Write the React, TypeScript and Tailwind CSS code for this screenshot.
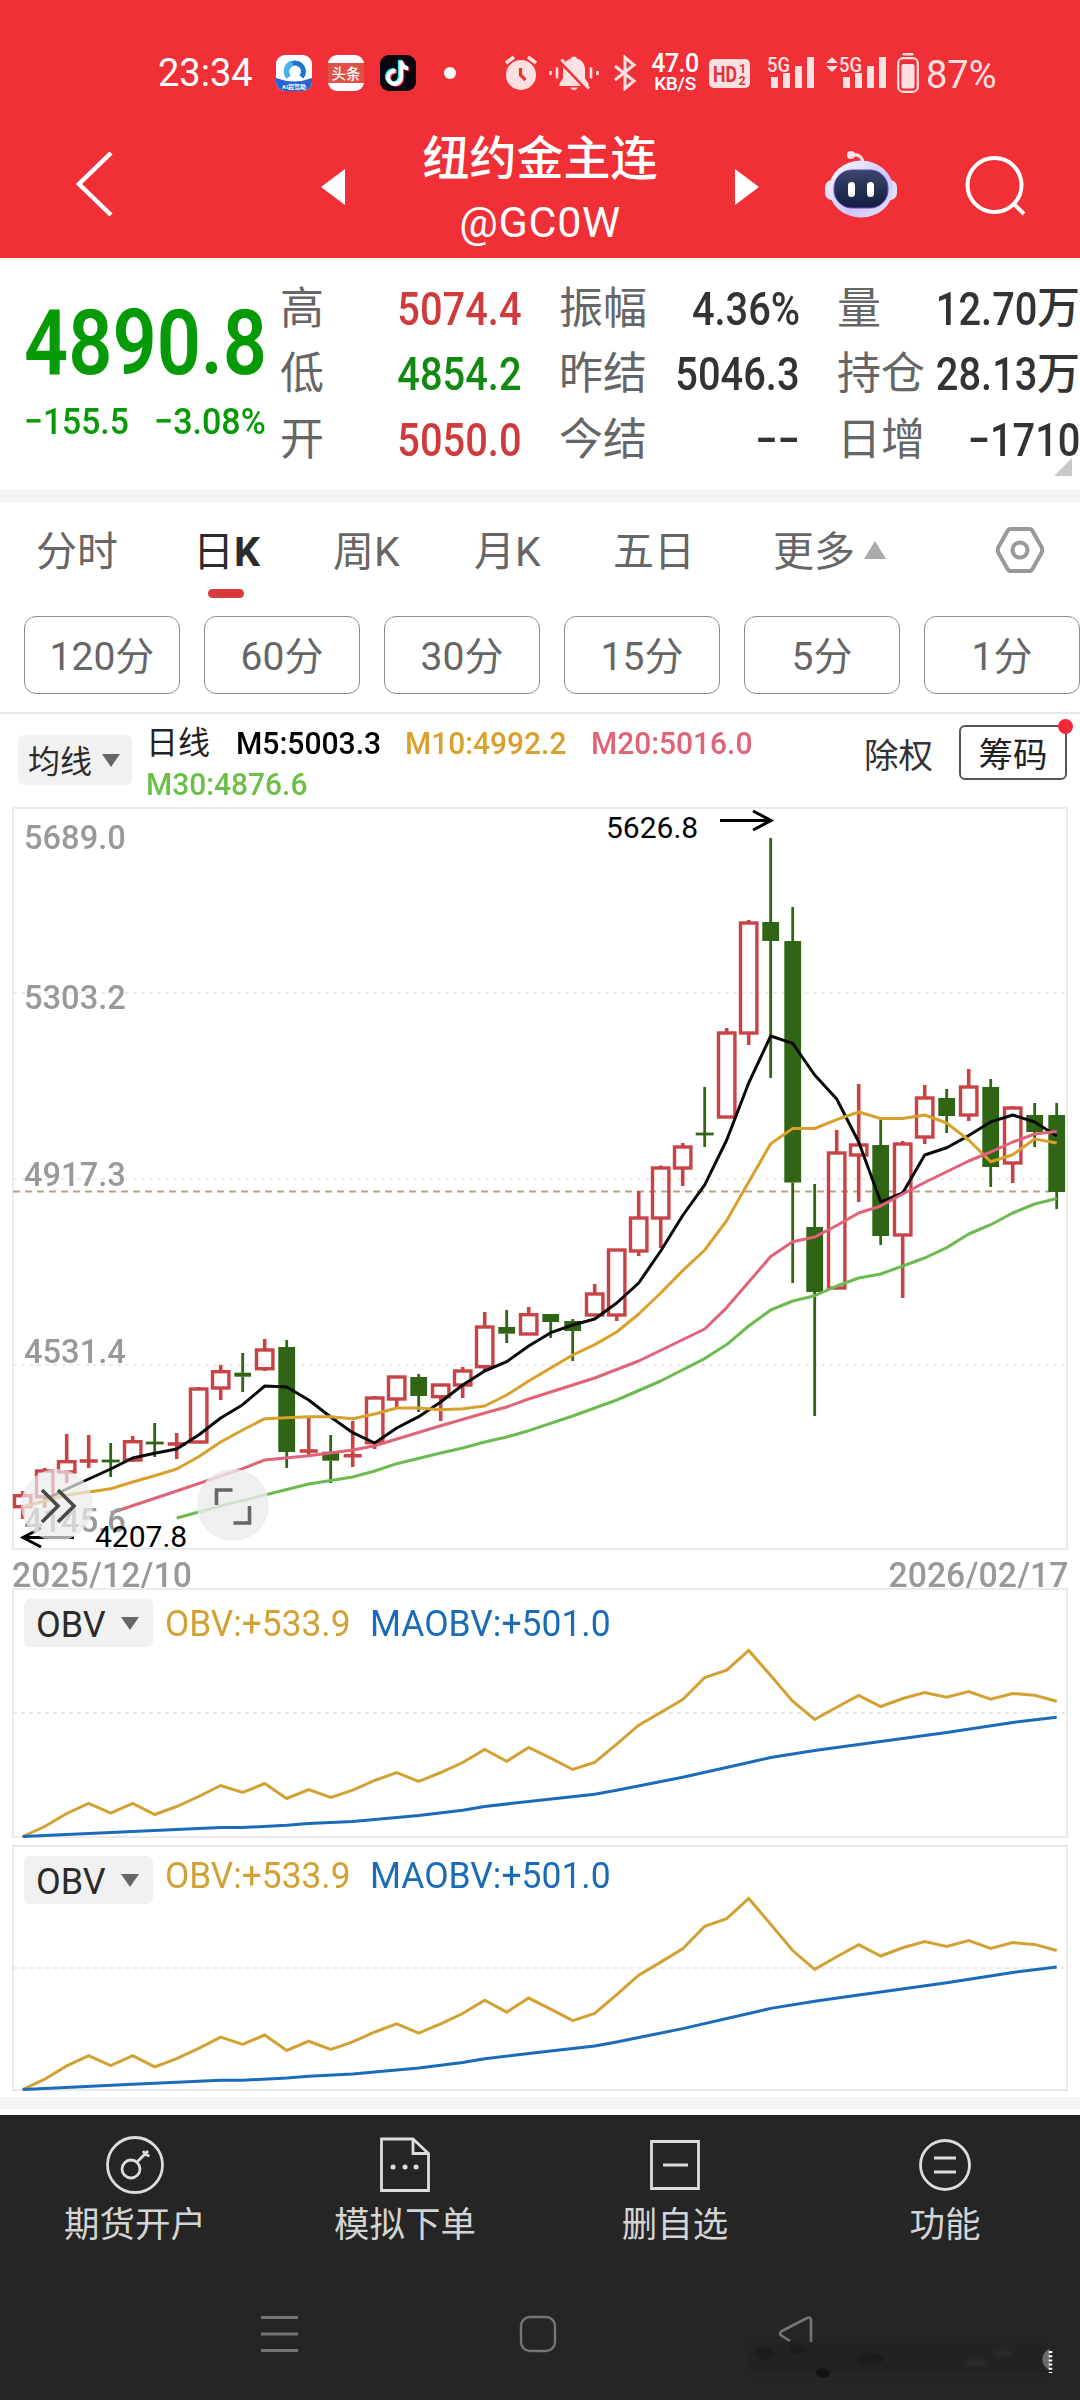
import type { ReactNode } from "react";
import clsx from "clsx";

const STEP = 22;
const X0 = 22.7;
const xAt = (i: number) => X0 + i * STEP;

// [high, body top, body bottom, low, rising] in chart units, top to bottom
type Candle = [number, number, number, number, 0 | 1];

const candles: Candle[] = [
  [1491, 1495.7, 1506.7, 1519, 1],
  [1468, 1471, 1496.7, 1508, 1],
  [1434, 1461.7, 1472, 1483, 1],
  [1435, 1461, 1461, 1468, 1],
  [1443, 1461, 1461, 1477, 0],
  [1436, 1441.7, 1460, 1462, 1],
  [1423, 1443, 1443, 1457, 0],
  [1433, 1444, 1444, 1459, 1],
  [1387, 1389, 1442, 1442, 1],
  [1365, 1371.7, 1388, 1400, 1],
  [1353, 1372.7, 1376.7, 1392, 0],
  [1339, 1350, 1368.7, 1371, 1],
  [1340, 1347, 1452, 1468, 0],
  [1418, 1451, 1451, 1456, 1],
  [1435, 1451.7, 1460.7, 1483, 0],
  [1421, 1455.7, 1455.7, 1467, 1],
  [1396, 1398, 1442.7, 1449, 1],
  [1377, 1377, 1399, 1408, 1],
  [1374, 1377, 1396, 1412, 0],
  [1385, 1385, 1396.7, 1421, 1],
  [1367, 1371, 1385, 1398, 1],
  [1312, 1327, 1366.7, 1371, 1],
  [1310, 1327, 1333.7, 1343, 0],
  [1307, 1314.7, 1334, 1334, 1],
  [1314, 1314, 1322, 1338, 0],
  [1319, 1321, 1331, 1361, 0],
  [1284, 1294, 1315, 1316, 1],
  [1250, 1250, 1315, 1321, 1],
  [1191, 1218, 1251, 1256, 1],
  [1165.5, 1168, 1218, 1248, 1],
  [1143, 1147, 1168, 1186, 1],
  [1087, 1134, 1134, 1147, 0],
  [1028, 1033, 1117, 1117, 1],
  [920, 923, 1033, 1045, 1],
  [838, 922, 941, 1078, 0],
  [907, 941, 1182.5, 1283, 0],
  [1184, 1227, 1292, 1416, 0],
  [1130, 1153, 1288, 1289, 1],
  [1084, 1145, 1155, 1202, 1],
  [1117, 1145, 1236, 1245, 0],
  [1141, 1144, 1235, 1298, 1],
  [1085, 1098, 1137, 1144, 1],
  [1089, 1098, 1116, 1133, 0],
  [1069, 1087, 1115, 1121, 1],
  [1079, 1087, 1167, 1187, 0],
  [1106, 1108, 1163, 1183, 1],
  [1103, 1115, 1132, 1147, 0],
  [1103, 1115, 1192, 1209, 0],
];

const series = (start: number, ys: number[]): [number, number][] =>
  ys.map((y, i) => [start + i, y]);

const ma5 = series(1, [
  1500, 1489, 1479, 1469, 1458, 1453.3, 1449, 1435, 1418, 1404.7, 1386, 1387,
  1400, 1417, 1432.7, 1443, 1428, 1416.7, 1402, 1385, 1371, 1361.7, 1346,
  1332.7, 1325, 1319, 1303, 1283, 1251, 1215.5, 1184.8, 1140, 1083, 1036,
  1043.4, 1075, 1099, 1142, 1201.8, 1193, 1155, 1147.8, 1135.6, 1121.9, 1115,
  1122, 1136,
]);

const ma10 = series(0, [
  1506.7, 1501, 1495, 1492, 1488.7, 1482, 1475.7, 1469, 1456.7, 1442, 1430,
  1418.7, 1417.7, 1416.7, 1416.7, 1418.7, 1414, 1408, 1408, 1409.7, 1408.7,
  1406, 1395, 1381, 1368, 1355, 1344.6, 1332, 1314, 1293, 1270.6, 1250, 1220.6,
  1182, 1143.7, 1128.5, 1128.5, 1119.6, 1112, 1118.5, 1118.5, 1115, 1123, 1140,
  1161.8, 1154.8, 1139, 1143,
]);

const ma20: [number, number][] = [
  [4, 1513], [7, 1491], [10, 1468.7], [11, 1460], [13, 1455.7], [15, 1450],
  [16, 1445.7], [19, 1425.7], [21, 1413], [22, 1407], [23, 1399], [24, 1392],
  [26, 1378], [28, 1361], [31, 1329], [32, 1307.6], [34, 1256.5], [35, 1241.7],
  [36, 1237], [37, 1225.5], [38, 1213], [39, 1206], [40, 1194], [41, 1182.5],
  [43, 1161], [44, 1152], [45, 1142], [46, 1134], [47, 1131.5],
];

const ma30: [number, number][] = [
  [7, 1518], [9, 1506], [11, 1495], [13, 1484], [15, 1477], [16, 1471],
  [17, 1463.7], [19, 1453], [20, 1448], [21, 1442], [22, 1437], [23, 1430.7],
  [25, 1416], [27, 1400], [29, 1381], [31, 1358.6], [32, 1344.6], [33, 1326],
  [34, 1310], [35, 1301], [36, 1295.7], [37, 1286], [38, 1278], [39, 1274],
  [41, 1258], [42, 1247.6], [43, 1234], [44, 1224.7], [45, 1213], [46, 1204],
  [47, 1198.5],
];

// heights above the panel's base line
const obv = series(0, [
  0, 10, 23, 33, 23.3, 33, 22, 30, 40, 51, 44, 53, 38, 47, 39, 46.3, 56, 64, 55,
  64, 74, 87, 75.3, 89, 78.3, 67, 74, 92.3, 111.3, 124, 137, 159, 166.3, 186,
  161, 135.3, 117, 129.3, 141, 130, 138, 144, 139.3, 145, 137.3, 143, 141.3,
  135.3,
]);

const maobv: [number, number][] = [
  [0, 0], [1, 1], [5, 5], [9, 9], [10, 9], [12, 11.3], [13, 13], [15, 15],
  [16, 17], [17, 19], [18, 21], [20, 26.3], [21, 30], [23, 35], [26, 42.3],
  [27, 46.3], [30, 59.3], [33, 74], [34, 79], [36, 86], [38, 92], [39, 95],
  [42, 104], [45, 114], [47, 119.3],
];

const toPoints = (data: [number, number][], y = (v: number) => v) =>
  data.map(([i, v]) => `${xAt(i)},${y(v)}`).join(" ");

function StatusBar() {
  return (
    <div className="flex h-[146px] items-center pl-[158px] text-[#ffe0e1]">
      <span className="w-[118px] text-[38px] leading-none text-white">23:34</span>
      <svg className="mr-4 size-9" viewBox="0 0 36 36">
        <rect width="36" height="36" rx="9" fill="#fff" />
        <path d="M12.500 22a8.500 8.500 0 1 1 13 0" fill="none" stroke="#1f74cf" strokeWidth="5" />
        <path d="M12.500 22a8.500 8.500 0 0 1 4-14" fill="none" stroke="#45b4ea" strokeWidth="5" />
        <path d="M0 23Q18 30 36 23V27a9 9 0 0 1-9 9H9a9 9 0 0 1-9-9Z" fill="#2563d4" />
        <text x="18" y="33.500" fontSize="6" textAnchor="middle" fill="#fff" fontWeight="700">
          AI超驾助
        </text>
      </svg>
      <svg className="mr-4 size-9" viewBox="0 0 36 36">
        <rect width="36" height="36" rx="9" fill="#fff" />
        <rect y="8" width="36" height="20" fill="#e05046" />
        <text x="18" y="23.500" fontSize="14.500" textAnchor="middle" fill="#fff" fontWeight="500">
          头条
        </text>
      </svg>
      <svg className="mr-7 size-9" viewBox="0 0 36 36">
        <rect width="36" height="36" rx="9" fill="#08060f" />
        <g fill="none" strokeWidth="4">
          <path d="M16 16a6.500 6.500 0 1 0 5.500 6.500V6c.5 4.500 3 7 7 7.500" stroke="#fe2c55" transform="translate(.8 .8)" />
          <path d="M16 16a6.500 6.500 0 1 0 5.500 6.500V6c.5 4.500 3 7 7 7.500" stroke="#25f4ee" transform="translate(-1.600 -1)" />
          <path d="M16 16a6.500 6.500 0 1 0 5.500 6.500V6c.5 4.500 3 7 7 7.500" stroke="#fff" transform="translate(-.4 0)" />
        </g>
      </svg>
      <span className="size-3 rounded-full bg-white" />
      <svg className="ml-[49px] h-9 w-8" viewBox="0 0 32 36" fill="currentColor">
        <circle cx="16" cy="20" r="15" />
        <path d="M1 8l8-6M31 8l-8-6" stroke="currentColor" strokeWidth="3.500" />
        <path d="M15.500 13v7l5 5" fill="none" stroke="#f12f37" strokeWidth="3.200" />
      </svg>
      <svg className="ml-3 h-9 w-[50px]" viewBox="0 0 50 36" fill="currentColor">
        <path d="M25 1.500a3 3 0 0 1 3 2c5 1.500 8 5.500 8 11v9l3.500 5v2.500h-29v-2.500l3.500-5v-9c0-5.500 3-9.500 8-11a3 3 0 0 1 3-2Z" />
        <path d="M21 32.500h8q-4 5-8 0Z" />
        <path d="M1.500 16v4M8 12.500v11M42 12.500v11M48.500 16v4" stroke="currentColor" strokeWidth="2.600" />
        <path d="M10.500 6L38 35" stroke="#f12f37" strokeWidth="3" />
        <path d="M12.500 4.500L40 33.500" stroke="currentColor" strokeWidth="3" />
      </svg>
      <svg className="ml-[14px] h-9 w-6" viewBox="0 0 24 36" fill="none" stroke="currentColor" strokeWidth="3">
        <path d="M2 11l19 15-9 7.500V2.500L21 10 2 25" />
      </svg>
      <div className="ml-[13px] flex w-[50px] flex-col items-center font-medium text-white">
        <span className="text-[25px] leading-[19px] tracking-[-0.5px]">47.0</span>
        <span className="mt-[2px] text-[19px] leading-[18px] tracking-[-0.3px]">KB/S</span>
      </div>
      <svg className="ml-[9px] h-[29px] w-[41px]" viewBox="0 0 41 29">
        <rect width="41" height="29" rx="5" fill="currentColor" />
        <g fill="#e0323a" fontWeight="700">
          <text x="4" y="22.500" fontSize="22" textLength="24" lengthAdjust="spacingAndGlyphs">HD</text>
          <text x="30" y="13.500" fontSize="12.500">1</text>
          <text x="29.500" y="26" fontSize="12.500">2</text>
        </g>
      </svg>
      <Signal className="ml-[17px]" />
      <svg className="ml-[11px] h-9 w-3" viewBox="0 0 12 36" fill="currentColor">
        <path d="M0 8l6-6 6 6ZM0 11l6 6 6-6Z" />
      </svg>
      <Signal className="ml-px" />
      <svg className="ml-[10px] h-10 w-[22px]" viewBox="0 0 22 40">
        <rect x="5.500" width="11" height="2.600" rx="1" fill="currentColor" />
        <rect x="1.200" y="5.200" width="19.600" height="33.600" rx="5" fill="none" stroke="currentColor" strokeWidth="2.200" />
        <rect x="4.500" y="11" width="13" height="24.500" rx="2" fill="currentColor" />
      </svg>
      <span className="mt-[3px] ml-[7px] text-[38px] leading-none">87%</span>
    </div>
  );
}

function Signal({ className }: { className?: string }) {
  return (
    <svg className={clsx("h-9 w-12 overflow-visible", className)} viewBox="0 0 48 36" fill="currentColor">
      <text x="0" y="16.500" fontSize="21" fontWeight="500" textLength="23" lengthAdjust="spacingAndGlyphs">
        5G
      </text>
      <path d="M4 22h7v11H4ZM16 18h7v15h-7ZM28 11h7v22h-7ZM40 2h7v31h-7Z" />
    </svg>
  );
}

function TitleBar() {
  return (
    <div className="flex h-28 items-start text-white">
      <svg className="mt-[6px] ml-[75px] h-[66px] w-10" viewBox="0 0 40 66" fill="none" stroke="#fff" strokeWidth="4.500">
        <path d="M36 1L4 32l32 31" />
      </svg>
      <svg className="mt-[23px] ml-[206px] h-9 w-6" viewBox="0 0 24 36" fill="#fff">
        <path d="M0 18L24 0v36Z" />
      </svg>
      <div className="-mt-[14px] flex w-[390px] flex-col items-center">
        <span className="text-[47px] leading-[54px] font-medium">纽约金主连</span>
        <span className="mt-[12px] text-[43px] leading-[48px] tracking-[0.7px]">@GC0W</span>
      </div>
      <svg className="mt-[23px] h-9 w-6" viewBox="0 0 24 36" fill="#fff">
        <path d="M24 18L0 0v36Z" />
      </svg>
      <svg className="mt-1 ml-[66px] h-[68px] w-[72px]" viewBox="0 0 72 68">
        <defs>
          <linearGradient id="shell" x1="0" y1="0" x2="1" y2="1">
            <stop offset="0" stopColor="#fff" />
            <stop offset=".6" stopColor="#cfc4fb" />
            <stop offset="1" stopColor="#e9e4ff" />
          </linearGradient>
          <linearGradient id="visor" x1="0" y1="0" x2="0" y2="1">
            <stop offset="0" stopColor="#3b466b" />
            <stop offset="1" stopColor="#101d3d" />
          </linearGradient>
        </defs>
        <path d="M26 5q10-2 12 7" fill="none" stroke="#fbe3ea" strokeWidth="3" />
        <circle cx="26" cy="5" r="4" fill="#fbe3ea" />
        <rect y="30" width="72" height="20" rx="7" fill="#e6ddfa" />
        <ellipse cx="36" cy="39" rx="32" ry="28.500" fill="url(#shell)" />
        <rect x="9" y="20" width="54" height="38" rx="18" fill="url(#visor)" stroke="#5f49c9" />
        <rect x="23" y="32" width="7" height="15" rx="3.500" fill="#fff" />
        <rect x="42" y="32" width="7" height="15" rx="3.500" fill="#fff" />
      </svg>
      <svg className="mt-[9px] ml-[68px] h-[62px] w-[62px]" viewBox="0 0 62 62" fill="none" stroke="#fff" strokeWidth="4">
        <circle cx="29.500" cy="30" r="27" />
        <path d="M49 49l10 10" />
      </svg>
    </div>
  );
}

const quoteRows = [
  [
    { label: "高", value: "5074.4", color: "text-[#cf3b3d]" },
    { label: "振幅", value: "4.36%", color: "text-[#333]" },
    { label: "量", value: "12.70", unit: "万", color: "text-[#333]" },
  ],
  [
    { label: "低", value: "4854.2", color: "text-[#128a12]" },
    { label: "昨结", value: "5046.3", color: "text-[#333]" },
    { label: "持仓", value: "28.13", unit: "万", color: "text-[#333]" },
  ],
  [
    { label: "开", value: "5050.0", color: "text-[#cf3b3d]" },
    { label: "今结", value: "−−", color: "text-[#333]" },
    { label: "日增", value: "−1710", color: "text-[#333]" },
  ],
];

function Quote() {
  return (
    <section className="relative flex h-[232px] bg-white">
      <div className="w-[280px] pl-6 text-[#079a07]">
        <div className="mt-[42px] origin-left scale-x-[0.86] text-[90px] leading-[88px] font-semibold whitespace-nowrap">
          4890.8
        </div>
        <div className="mt-[12px] flex text-[37px] leading-[44px] font-medium whitespace-nowrap">
          <span className="w-[130px] origin-left scale-x-[0.91]">−155.5</span>
          <span className="origin-left scale-x-[0.92]">−3.08%</span>
        </div>
      </div>
      <div className="flex flex-1 flex-col pt-[18px]">
        {quoteRows.map((row, i) => (
          <div key={i} className="grid h-[65.5px] grid-cols-[242px_278px_280px] items-center">
            {row.map(({ label, value, unit, color }, col) => (
              <div
                key={label}
                className={clsx(
                  "flex items-center justify-between whitespace-nowrap",
                  col > 0 && "pl-[37px]",
                )}
              >
                <span className="text-[44px] leading-none text-[#666]">{label}</span>
                <span className={clsx("-ml-5 flex items-center leading-none font-medium", color)}>
                  <span className="origin-right scale-x-[0.865] text-[46px]">{value}</span>
                  {unit && <span className="text-[43px]">{unit}</span>}
                </span>
              </div>
            ))}
          </div>
        ))}
      </div>
      <svg className="absolute right-2 bottom-[14px] size-[18px]" viewBox="0 0 18 18">
        <path d="M18 0v18H0Z" fill="#c8c8c8" />
      </svg>
    </section>
  );
}

function PeriodTabs() {
  return (
    <nav className="flex h-[114px] items-start pt-[28px] pl-[36px] text-[41px] leading-[44px] whitespace-nowrap text-[#666]">
      <span className="w-[157px]">分时</span>
      <span className="relative w-[140px] text-[#2b2b2b]">
        日<span className="font-bold">K</span>
        <span className="absolute top-[59px] left-[15px] h-[9px] w-9 rounded-full bg-[#d8393c]" />
      </span>
      <span className="w-[141px]">周K</span>
      <span className="w-[139px]">月K</span>
      <span className="w-[160px]">五日</span>
      <span className="w-[91px]">更多</span>
      <svg className="mt-[11px] h-[18px] w-[22px]" viewBox="0 0 22 18" fill="#aaa">
        <path d="M11 0l11 18H0Z" />
      </svg>
      <svg className="-mt-[3px] ml-[110px] h-[46px] w-12 self-start" viewBox="0 0 48 46" fill="none" stroke="#999" strokeWidth="4">
        <path d="M14.500 2h19q2 0 3 2l9 16q1.500 3 0 6l-9 16q-1 2-3 2h-19q-2 0-3-2l-9-16q-1.500-3 0-6l9-16q1-2 3-2Z" />
        <circle cx="24" cy="23" r="7.500" />
      </svg>
    </nav>
  );
}

function MinuteButtons() {
  return (
    <div className="flex h-[96px] gap-6 pl-6">
      {["120分", "60分", "30分", "15分", "5分", "1分"].map((label) => (
        <button
          key={label}
          className="h-[78px] w-[156px] shrink-0 rounded-xl border border-[#8c8c8c] pt-[4px] text-[39px] leading-none text-[#666]"
        >
          {label}
        </button>
      ))}
    </div>
  );
}

function Picker({ children, className }: { children: ReactNode; className?: string }) {
  return (
    <span className={clsx("flex shrink-0 items-center justify-between rounded-md bg-[#f1f1f1] text-[#2b2b2b]", className)}>
      <span className="pt-[3px]">{children}</span>
      <svg className="h-[13px] w-[18px]" viewBox="0 0 18 13" fill="#666">
        <path d="M0 0h18L9 13Z" />
      </svg>
    </span>
  );
}

function MaLegend() {
  return (
    <div className="flex h-[95px] border-t-2 border-[#e4e9e8] pl-[18px]">
      <Picker className="mt-[21px] h-[50px] w-[114px] pr-3 pl-[10px] text-[32px] leading-none">均线</Picker>
      <div className="ml-[14px] w-[700px] pt-[9px] text-[32px] font-medium whitespace-nowrap">
        <div className="flex h-[40px] items-center leading-none">
          <span className="w-[90px] text-[32px] font-normal text-[#222]">日线</span>
          <span className="w-[169px] origin-left scale-x-[0.94] text-black">M5:5003.3</span>
          <span className="w-[186px] origin-left scale-x-[0.935] text-[#daa02c]">M10:4992.2</span>
          <span className="origin-left scale-x-[0.935] text-[#e0637a]">M20:5016.0</span>
        </div>
        <div className="flex h-[41px] origin-left scale-x-[0.935] items-center leading-none text-[#6cc04a]">
          M30:4876.6
        </div>
      </div>
      <span className="mt-[23px] ml-[18px] w-[95px] text-[34.500px] leading-[38px] text-[#333]">除权</span>
      <span className="relative mt-[11px] flex h-[55px] w-[108px] items-center justify-center rounded-md border-2 border-[#555] pt-[5px] text-[34.500px] leading-none text-[#222]">
        筹码
        <span className="absolute -top-[8px] -right-2 size-[15px] rounded-full bg-[#f0283a]" />
      </span>
    </div>
  );
}

const axisLabels = [
  { text: "5689.0", className: "top-[11px]" },
  { text: "5303.2", className: "top-[171px]" },
  { text: "4917.3", className: "top-[348px]" },
  { text: "4531.4", className: "top-[525px]" },
  { text: "4145.6", className: "top-[694px]" },
];

function CandleChart() {
  return (
    <div className="relative mx-[12px] h-[743px] w-[1056px]">
      <svg className="block h-[743px] w-[1056px]" viewBox="12 807 1056 743" fill="none">
        <rect x="13" y="808" width="1054" height="741" stroke="#ebebeb" strokeWidth="2" />
        {[993, 1179, 1365].map((y) => (
          <path key={y} d={`M13 ${y}H1067`} stroke="#e6e6e6" strokeWidth="1.500" strokeDasharray="4 4" />
        ))}
        <path d="M13 1191.500H1050" stroke="#b9a47a" strokeWidth="1.800" strokeDasharray="7 5" />
        {candles.map(([high, top, bottom, low, rising], i) => {
          const x = xAt(i);
          const color = rising ? "#c94246" : "#2f6515";
          const flat = bottom - top < 1;
          return (
            <g key={i} stroke={color} strokeWidth={rising ? 3.600 : 2.800}>
              <path d={`M${x} ${high}V${top}M${x} ${bottom}V${low}`} />
              {flat && <path d={`M${x - 9} ${top}H${x + 9}`} />}
              {!flat && rising === 1 && (
                <rect x={x - 8.200} y={top} width="16.400" height={bottom - top} strokeWidth="3.400" />
              )}
              {!flat && rising === 0 && (
                <rect x={x - 8.400} y={top} width="16.800" height={bottom - top} fill={color} stroke="none" />
              )}
            </g>
          );
        })}
        <g strokeWidth="3" strokeLinejoin="round">
          <polyline points={toPoints(ma5)} stroke="#0a0a0a" />
          <polyline points={toPoints(ma10)} stroke="#daa02c" />
          <polyline points={toPoints(ma20)} stroke="#e0637a" />
          <polyline points={toPoints(ma30)} stroke="#6cba50" />
        </g>
        <g stroke="#000" strokeWidth="3">
          <path d="M720 820.500H770M753 811l18 9.500-18 9.500" />
          <path d="M74 1537.500H24M41 1528l-18 9.500 18 9.500" />
        </g>
      </svg>
      {axisLabels.map(({ text, className }) => (
        <span
          key={text}
          className={clsx(
            "absolute left-[12px] origin-left scale-x-[0.96] text-[34px] leading-[38px] font-medium text-[#999]",
            className,
          )}
        >
          {text}
        </span>
      ))}
      <span className="absolute top-[4px] left-[594px] text-[30px] leading-[34px] text-black">5626.8</span>
      <span className="absolute top-[713px] left-[83px] text-[30px] leading-[34px] text-black">4207.8</span>
      <svg className="absolute top-[662px] left-[9px] size-[72px]" viewBox="0 0 72 72" fill="none">
        <circle cx="36" cy="36" r="36" fill="#ebebeb" fillOpacity=".7" />
        <path d="M21 21l16 16-16 16M37 21l16 16-16 16" stroke="#4a4a4a" strokeWidth="3.600" />
      </svg>
      <svg className="absolute top-[662px] left-[185px] size-[72px]" viewBox="0 0 72 72" fill="none">
        <circle cx="36" cy="36" r="36" fill="#ebebeb" fillOpacity=".8" />
        <path d="M19.500 36V21h16M52.500 37v17h-16" stroke="#666" strokeWidth="3.600" />
      </svg>
    </div>
  );
}

type ObvProps = { frame: string; valueRow: string; height: number; grid: number; scale: number };

function ObvPanel({ frame, valueRow, height, grid, scale }: ObvProps) {
  const y = (v: number) => height - 1.500 - v * scale;
  return (
    <div className={clsx("relative mx-[12px]", frame)}>
      <svg className="block size-full" viewBox={`12 0 1056 ${height}`} fill="none">
        <rect x="13" y="1" width="1054" height={height - 2} stroke="#ebebeb" strokeWidth="2" />
        <path d={`M13 ${grid}H1067`} stroke="#e2e2e2" strokeWidth="1.500" strokeDasharray="4 4" />
        <polyline points={toPoints(obv, y)} stroke="#d3a133" strokeWidth="3" />
        <polyline points={toPoints(maobv, y)} stroke="#1a6cb8" strokeWidth="3" />
      </svg>
      <div className="absolute top-[11px] left-[12px] flex items-start text-[36px] whitespace-nowrap">
        <Picker className="h-[48px] w-[129px] pr-[14px] pl-3 text-[36px] leading-none">OBV</Picker>
        <div className={clsx("flex pl-[12px] leading-10", valueRow)}>
          <span className="w-[205px] origin-left scale-x-[0.98] text-[#d3a133]">OBV:+533.9</span>
          <span className="origin-left scale-x-[0.985] text-[#1a6cb8]">MAOBV:+501.0</span>
        </div>
      </div>
    </div>
  );
}

const actions = [
  {
    label: "期货开户",
    icon: (
      <>
        <circle cx="30" cy="30" r="27.500" />
        <circle cx="26" cy="34" r="9" />
        <path d="M32 27l11-11M38 16l2.500 3.500 4 1.500" />
      </>
    ),
  },
  {
    label: "模拟下单",
    icon: (
      <>
        <path d="M6.500 4H38L53.500 18.500V55.500h-47ZM38 4v14.500h15.500" />
        <path d="M18 32h.1M30 32h.1M41 32h.1" strokeWidth="5" strokeLinecap="round" />
      </>
    ),
  },
  {
    label: "删自选",
    icon: <path d="M6.500 6.500h47v47h-47ZM18 30h25" />,
  },
  {
    label: "功能",
    icon: (
      <>
        <circle cx="30" cy="30" r="24.500" />
        <path d="M19 23h22M19 37h22" />
      </>
    ),
  },
];

function BottomBar() {
  return (
    <footer className="relative h-[285px] bg-[#252525]">
      <div className="grid grid-cols-4 pt-[20px]">
        {actions.map(({ label, icon }) => (
          <div key={label} className="flex flex-col items-center">
            <svg className="size-[60px]" viewBox="0 0 60 60" fill="none" stroke="#dcdcdc" strokeWidth="2.800">
              {icon}
            </svg>
            <span className="mt-[11px] text-[35.500px] leading-[38px] text-[#d4d4d4]">{label}</span>
          </div>
        ))}
      </div>
      <div className="mt-[71px] flex items-center pl-[261px]">
        <svg className="h-[38px] w-[38px]" viewBox="0 0 38 38" stroke="#757575" strokeWidth="3">
          <path d="M0 2.500h37M0 19h37M0 35.500h37" />
        </svg>
        <svg className="ml-[220px] h-[38px] w-[38px]" viewBox="0 0 38 38" fill="none" stroke="#757575" strokeWidth="2.400">
          <rect x="2" y="2" width="34" height="34" rx="9" />
        </svg>
        <svg className="ml-[220px] h-[38px] w-[38px]" viewBox="0 0 38 38" fill="none" stroke="#757575" strokeWidth="2.600">
          <path d="M13 26L5 21q-4-2.500 0-5L30 3q4-2 4 3v21" />
        </svg>
      </div>
      <svg className="absolute top-[226px] left-[740px] h-[40px] w-[320px]" viewBox="0 0 320 40">
        <defs>
          <filter id="smudge" x="-10%" y="-40%" width="120%" height="180%">
            <feGaussianBlur stdDeviation="2.500" />
          </filter>
        </defs>
        <g filter="url(#smudge)">
          <rect x="8" y="4" width="298" height="28" fill="#222" />
          <ellipse cx="25" cy="13" rx="9" ry="6" fill="#1a1a1a" />
          <ellipse cx="57" cy="8" rx="8" ry="5" fill="#1a1a1a" />
          <ellipse cx="130" cy="18" rx="14" ry="6" fill="#1e1e1e" />
          <ellipse cx="262" cy="12" rx="10" ry="3" fill="#2f2f2f" />
          <ellipse cx="236" cy="22" rx="12" ry="4" fill="#292929" />
        </g>
        <ellipse cx="83" cy="32" rx="7" ry="4.500" fill="#131313" />
        <path d="M310 8a11 11 0 0 0 0 21Z" fill="#6d6d6d" />
        <path d="M310.500 10v22" stroke="#fff" strokeWidth="3.500" strokeDasharray="2 2.200" />
      </svg>
    </footer>
  );
}

export default function App() {
  return (
    <div className="h-[2400px] w-[1080px] overflow-hidden bg-white font-[Roboto,'Noto_Sans_CJK_SC',sans-serif]">
      <header className="bg-[#f12f37]">
        <StatusBar />
        <TitleBar />
      </header>
      <Quote />
      <div className="h-3 bg-[#f4f4f4]" />
      <PeriodTabs />
      <MinuteButtons />
      <MaLegend />
      <CandleChart />
      <div className="flex h-[38px] items-end justify-between px-[12px] text-[35px] leading-[24px] font-medium text-[#999]">
        <span className="origin-left scale-x-[0.965]">2025/12/10</span>
        <span className="origin-right scale-x-[0.965]">2026/02/17</span>
      </div>
      <ObvPanel frame="h-[250px]" valueRow="mt-[5px]" height={250} grid={125} scale={1} />
      <div className="h-[7px]" />
      <ObvPanel frame="h-[246px]" valueRow="mt-0" height={246} grid={123} scale={1.027} />
      <div className="mt-[6px] mb-[6px] h-3 bg-[#f4f4f4]" />
      <BottomBar />
    </div>
  );
}
